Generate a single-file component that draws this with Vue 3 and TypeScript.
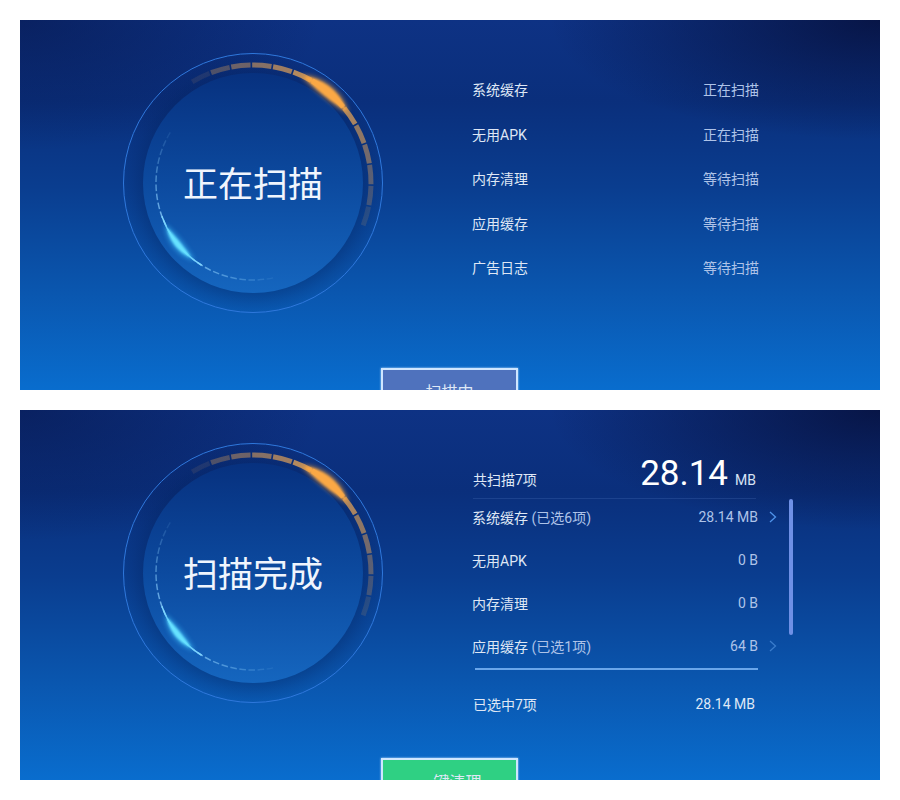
<script setup lang="ts">
const C = 130

function polar(r: number, deg: number): [number, number] {
  const a = ((deg - 90) * Math.PI) / 180
  return [C + r * Math.cos(a), C + r * Math.sin(a)]
}

function arc(r: number, from: number, to: number): string {
  const [x1, y1] = polar(r, from)
  const [x2, y2] = polar(r, to)
  const large = to - from > 180 ? 1 : 0
  return `M${x1.toFixed(2)} ${y1.toFixed(2)}A${r} ${r} 0 ${large} 1 ${x2.toFixed(2)} ${y2.toFixed(2)}`
}

function taper(r: number, halfWidth: number, from: number, to: number): string {
  const steps = 24
  const outer: string[] = []
  const inner: string[] = []
  for (let i = 0; i <= steps; i++) {
    const t = i / steps
    const w = halfWidth * Math.pow(Math.sin(Math.PI * t), 0.7)
    const deg = from + (to - from) * t
    const [ox, oy] = polar(r + w, deg)
    const [ix, iy] = polar(r - w, deg)
    outer.push(`${ox.toFixed(2)} ${oy.toFixed(2)}`)
    inner.unshift(`${ix.toFixed(2)} ${iy.toFixed(2)}`)
  }
  return `M${outer.join('L')}L${inner.join('L')}Z`
}

interface Seg { d: string; o: number }

const orange: Seg[] = []
for (let a = -31; a < 106; a += 10.2) {
  let o: number
  if (a < 30) o = 0.1 + Math.pow((a + 31) / 61, 0.7) * 0.75
  else o = Math.max(0.08, 0.95 - ((a - 30) / 75) * 0.85)
  orange.push({ d: arc(118, a, a + 9.4), o })
}

const dashes: Seg[] = []
for (let a = 168; a < 298; a += 5.4) {
  const dist = a < 232 ? (232 - a) / 64 : (a - 232) / 66
  dashes.push({ d: arc(97, a, a + 3.9), o: Math.max(0.08, 0.95 - dist * 0.85) })
}

const orangeGlow = taper(118, 5, 26, 52)
const orangeHalo = taper(118, 7, 24, 54)
const blueGlow = taper(97, 3, 220, 242)
const blueHalo = taper(97, 5.5, 217, 245)
const blueLine = arc(97, 212, 250)

interface Row { label: string; note?: string; value: string; arrow?: 'on' | 'dim' }

const scanning: Row[] = [
  { label: '系统缓存', value: '正在扫描' },
  { label: '无用APK', value: '正在扫描' },
  { label: '内存清理', value: '等待扫描' },
  { label: '应用缓存', value: '等待扫描' },
  { label: '广告日志', value: '等待扫描' },
]

const finished: Row[] = [
  { label: '系统缓存', note: ' (已选6项)', value: '28.14 MB', arrow: 'on' },
  { label: '无用APK', value: '0 B' },
  { label: '内存清理', value: '0 B' },
  { label: '应用缓存', note: ' (已选1项)', value: '64 B', arrow: 'dim' },
]

const panels = [
  { id: 'a', title: '正在扫描', button: '扫描中', done: false },
  { id: 'b', title: '扫描完成', button: '一键清理', done: true },
]
</script>

<template>
  <div class="page">
    <section v-for="p in panels" :key="p.id" class="panel">
      <div class="main">
        <div class="dial">
          <svg class="dial-art" viewBox="0 0 260 260" width="260" height="260">
            <defs>
              <linearGradient :id="p.id + 'disc'" x1="0" y1="0" x2="0" y2="1">
                <stop offset="0" stop-color="#07317f" />
                <stop offset="0.5" stop-color="#0c4a9f" />
                <stop offset="1" stop-color="#1566bf" />
              </linearGradient>
              <radialGradient :id="p.id + 'band'" cx="0.5" cy="0.5" r="0.5">
                <stop offset="0.84" stop-color="#03235f" stop-opacity="0.36" />
                <stop offset="0.93" stop-color="#03235f" stop-opacity="0.16" />
                <stop offset="1" stop-color="#03235f" stop-opacity="0.04" />
              </radialGradient>
              <filter :id="p.id + 'soft'" x="-50%" y="-50%" width="200%" height="200%">
                <feGaussianBlur stdDeviation="0.8" />
              </filter>
              <filter :id="p.id + 'wide'" x="-50%" y="-50%" width="200%" height="200%">
                <feGaussianBlur stdDeviation="2" />
              </filter>
              <filter :id="p.id + 'seg'" x="-10%" y="-10%" width="120%" height="120%">
                <feGaussianBlur stdDeviation="0.45" />
              </filter>
            </defs>
            <circle cx="130" cy="130" r="129.5" :fill="`url(#${p.id}band)`" stroke="#2f78dc" stroke-width="1" />
            <circle cx="130" cy="130" r="110" :fill="`url(#${p.id}disc)`" />
            <g :filter="`url(#${p.id}seg)`">
              <path
                v-for="(s, i) in orange"
                :key="'o' + i"
                :d="s.d"
                fill="none"
                stroke="#e8a557"
                stroke-width="5"
                :stroke-opacity="s.o"
              />
            </g>
            <path :d="orangeHalo" fill="#f7a43c" opacity="0.55" :filter="`url(#${p.id}wide)`" />
            <path :d="orangeGlow" fill="#fba845" :filter="`url(#${p.id}soft)`" />
            <path
              v-for="(s, i) in dashes"
              :key="'d' + i"
              :d="s.d"
              fill="none"
              stroke="#8fd2ff"
              stroke-width="1.5"
              :stroke-opacity="s.o"
            />
            <path :d="blueLine" fill="none" stroke="#7fd6ff" stroke-width="1.5" />
            <path :d="blueHalo" fill="#39b6f5" opacity="0.55" :filter="`url(#${p.id}wide)`" />
            <path :d="blueGlow" fill="#66e2ff" :filter="`url(#${p.id}soft)`" />
          </svg>
          <h1 class="dial-title">{{ p.title }}</h1>
        </div>

        <div v-if="!p.done" class="side side-scan">
          <div v-for="r in scanning" :key="r.label" class="scan-row">
            <span class="label">{{ r.label }}</span>
            <span class="value">{{ r.value }}</span>
          </div>
        </div>

        <div v-else class="side side-done">
          <div class="summary">
            <span class="label">共扫描7项</span>
            <span class="total"><b>28.14</b><small>MB</small></span>
          </div>
          <div class="scroller">
            <div v-for="r in finished" :key="r.label" class="done-row">
              <span class="label">{{ r.label }}<em v-if="r.note">{{ r.note }}</em></span>
              <span class="value">{{ r.value }}</span>
              <svg class="chev" :class="r.arrow" viewBox="0 0 8 12" width="8" height="12">
                <path v-if="r.arrow" d="M1 1l5.5 5L1 11" fill="none" stroke="currentColor" stroke-width="1.3" />
              </svg>
            </div>
            <span class="thumb"></span>
          </div>
          <div class="rule"></div>
          <div class="picked">
            <span class="label">已选中7项</span>
            <span class="picked-size">28.14 MB</span>
          </div>
        </div>
      </div>
      <button class="action" :class="{ green: p.done }" type="button">{{ p.button }}</button>
    </section>
  </div>
</template>

<style scoped>
.page {
  display: flex;
  flex-direction: column;
  gap: 20px;
  padding: 20px;
  width: 860px;
  font-family: Roboto, "Noto Sans CJK SC", sans-serif;
}
.panel {
  height: 370px;
  overflow: hidden;
  display: flex;
  flex-direction: column;
  align-items: center;
  background:
    radial-gradient(ellipse 330px 120px at 100% 0, rgba(6, 16, 60, 0.85), rgba(6, 16, 60, 0) 100%),
    radial-gradient(ellipse 300px 130px at 0 0, rgba(6, 22, 74, 0.6), rgba(6, 22, 74, 0) 100%),
    linear-gradient(180deg, #0e3284 0%, #0a2f7c 22%, #0a3d8f 45%, #0a55ad 72%, #096dce 100%);
}
.main {
  flex: none;
  width: 100%;
  height: 348px;
  display: flex;
  padding-left: 103px;
  box-sizing: border-box;
}
.dial {
  flex: none;
  width: 260px;
  height: 260px;
  margin-top: 33px;
  display: grid;
  place-items: center;
}
.dial-art,
.dial-title {
  grid-area: 1 / 1;
}
.dial-art {
  display: block;
}
.dial-title {
  margin: 0 0 4px;
  font-size: 35px;
  font-weight: 400;
  color: #f0f5fd;
}
.side {
  flex: none;
  margin-left: 89px;
  width: 320px;
  font-size: 14px;
}
.label {
  color: #dfe7f5;
}
.label em {
  font-style: normal;
  color: #aec3e8;
}
.value {
  color: #aec3e8;
}
.side-scan {
  padding-top: 47px;
  width: 287px;
}
.scan-row {
  height: 44.5px;
  display: flex;
  align-items: center;
  justify-content: space-between;
}
.side-done {
  padding-top: 39px;
}
.summary {
  width: 283px;
  height: 50px;
  box-sizing: border-box;
  margin-left: 1px;
  display: flex;
  align-items: center;
  justify-content: space-between;
  border-bottom: 1px solid rgba(110, 150, 220, 0.18);
}
.summary .label {
  padding-top: 11px;
}
.total {
  display: flex;
  align-items: baseline;
  color: #fff;
}
.total b {
  font-size: 35px;
  font-weight: 400;
}
.total small {
  font-size: 14px;
  margin-left: 7px;
  color: #d8e3f5;
}
.scroller {
  position: relative;
  width: 322px;
  margin-top: -4px;
}
.done-row {
  height: 43px;
  display: flex;
  align-items: center;
  width: 305px;
}
.done-row .label {
  flex: 1;
}
.chev {
  margin-left: 11px;
  flex: none;
}
.chev.on {
  color: #4f93ea;
}
.chev.dim {
  color: #3a7ccc;
}
.thumb {
  position: absolute;
  top: 4px;
  left: 317px;
  width: 4px;
  height: 136px;
  border-radius: 2px;
  background: #6f90e6;
}
.rule {
  margin: 1px 0 0 3px;
  width: 283px;
  height: 1.5px;
  background: #6aa6ea;
}
.picked {
  width: 282px;
  margin-left: 1px;
  height: 68px;
  display: flex;
  align-items: center;
  justify-content: space-between;
}
.picked-size {
  color: #dfe8f6;
}
.action {
  flex: none;
  width: 137px;
  height: 46px;
  margin-left: -1px;
  padding: 0;
  box-sizing: border-box;
  border: 2px solid #cfe6ff;
  box-shadow: 0 0 2px #bfe0ff;
  background: #4f72bd;
  color: #dfe8f6;
  font-family: inherit;
  font-size: 16px;
}
.action.green {
  background: #2fd083;
}
</style>
